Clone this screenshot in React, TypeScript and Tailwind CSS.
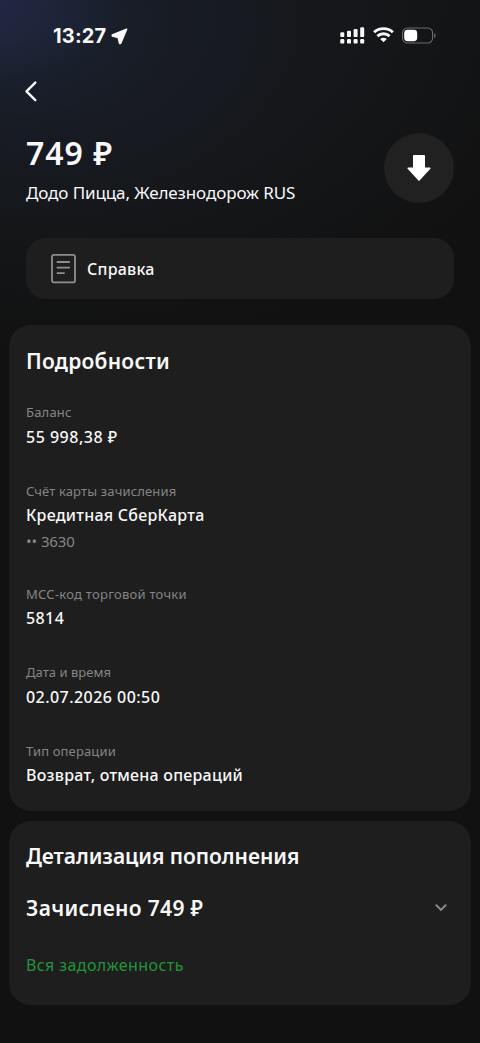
type Field = {
  label: string;
  value: string;
  note?: string;
  labelClass: string;
  valueClass: string;
};

const fields: Field[] = [
  { label: "Баланс", value: "55 998,38 ₽", labelClass: "tracking-[0.2px]", valueClass: "tracking-[0.5px]" },
  {
    label: "Счёт карты зачисления",
    value: "Кредитная СберКарта",
    note: "•• 3630",
    labelClass: "tracking-[0.15px]",
    valueClass: "tracking-[0.25px]",
  },
  { label: "МСС-код торговой точки", value: "5814", labelClass: "tracking-[0.25px]", valueClass: "tracking-[0.4px]" },
  { label: "Дата и время", value: "02.07.2026 00:50", labelClass: "tracking-[0.03px]", valueClass: "tracking-[0.45px]" },
  {
    label: "Тип операции",
    value: "Возврат, отмена операций",
    labelClass: "tracking-[0.14px]",
    valueClass: "tracking-[0.24px]",
  },
];

function StatusBar() {
  return (
    <div className="flex h-[70px] items-center justify-between pr-[44px] pl-[53px]">
      <div className="flex items-center gap-[5px] pt-[2px]">
        <span className="font-['Inter',sans-serif] text-[20px] leading-6 font-bold tracking-[0.2px]">13:27</span>
        <svg width="17" height="17" viewBox="0 0 17 17" fill="currentColor" stroke="currentColor" strokeWidth="1.6" strokeLinejoin="round">
          <path d="M15.6 1.2 1.3 6.9 1.4 8 7.2 9.4 8.6 15.4 9.6 15.5Z" />
        </svg>
      </div>
      <div className="flex items-center">
        <svg width="25" height="17" viewBox="0 0 25 17" fill="currentColor">
          <rect x="0.3" y="5.2" width="4" height="4.9" rx="1.2" />
          <rect x="7" y="3.8" width="4" height="6.3" rx="1.2" />
          <rect x="13.6" y="2" width="4" height="8.1" rx="1.2" />
          <rect x="20.2" y="0.2" width="4" height="9.9" rx="1.2" />
          <rect x="0.3" y="12" width="4" height="4.6" rx="1.2" />
          <rect x="7" y="12" width="4" height="4.6" rx="1.2" />
          <rect x="13.6" y="12" width="4" height="4.6" rx="1.2" />
          <rect x="20.2" y="12" width="4" height="4.6" rx="1.2" />
        </svg>
        <svg className="ml-[8px]" width="21" height="16" viewBox="0 0 21 16" fill="none" stroke="currentColor" strokeWidth="2.9">
          <path d="M1.1 5.3C6.3.4 14.7.4 19.9 5.3" />
          <path d="M4.4 9.1C7.9 5.9 13.1 5.9 16.6 9.1" />
          <path d="M7.2 11.9C9 10.2 12 10.2 13.8 11.9L10.5 15.2Z" fill="currentColor" stroke="none" />
        </svg>
        <svg className="ml-[8px]" width="34" height="17" viewBox="0 0 34 17">
          <rect x="0.6" y="1" width="30" height="15" rx="4.8" fill="none" stroke="#6c6d6f" strokeWidth="1.1" />
          <rect x="2.2" y="2.8" width="13" height="11.4" rx="3.4" fill="#fff" />
          <path d="M32.2 6v5c1.8-.8 1.8-4.2 0-5Z" fill="#6c6d6f" />
        </svg>
      </div>
    </div>
  );
}

function FieldRow({ label, value, note, labelClass, valueClass }: Field) {
  return (
    <div className="mb-[34px]">
      <dt className={`text-[13px] leading-[18px] text-[#858585] ${labelClass}`}>{label}</dt>
      <dd className={`mt-[4.5px] text-[16px] leading-[22px] font-[460] ${valueClass}`}>{value}</dd>
      {note && <dd className="mt-[4.5px] text-[15px] leading-[20px] tracking-[-0.1px] text-[#858585]">{note}</dd>}
    </div>
  );
}

export default function App() {
  return (
    <main className="h-[1043px] w-[480px] overflow-hidden bg-[#111111] bg-[radial-gradient(ellipse_120px_80px_at_0_0,#29285080,#29285000),radial-gradient(ellipse_330px_210px_at_0_20px,#1d293dcc,#1a213066_50%,#171a2000),radial-gradient(ellipse_520px_350px_at_10%_0,#16181d,#15171a_60%,#111111)] font-['Noto_Sans',sans-serif] text-[#f8f8f8]">
      <StatusBar />
      <div className="flex h-[42px] items-center pl-[24px]">
        <button aria-label="Назад">
          <svg width="14" height="22" viewBox="0 0 14 22" fill="none" stroke="currentColor" strokeWidth="2.4" strokeLinecap="round" strokeLinejoin="round">
            <path d="M11.3 2.6 2.5 11.4 11.3 20.2" />
          </svg>
        </button>
      </div>

      <header className="mt-[21px] flex h-[70px] items-start justify-between pr-[26px] pl-[26px]">
        <div>
          <h1 className="text-[32px] leading-10 font-[570] tracking-[1px]">749 ₽</h1>
          <p className="mt-[8px] text-[17px] leading-6 tracking-[-0.1px]">Додо Пицца, Железнодорож RUS</p>
        </div>
        <div className="flex size-[70px] items-center justify-center rounded-full bg-[#212122]">
          <svg width="24" height="28" viewBox="0 0 24 28" fill="#fff" stroke="#fff" strokeWidth="1.6" strokeLinejoin="round">
            <path d="M6.8 1.8H17.2V14.3H22.8L12 26 1.2 14.3H6.8Z" />
          </svg>
        </div>
      </header>

      <button className="mx-[26px] mt-[35px] flex h-[61px] w-[428px] items-center rounded-[20px] bg-[#1e1e1e] pl-[25px]">
        <svg width="25" height="30" viewBox="0 0 25 30" fill="none" stroke="#8e8e8e" strokeWidth="1.8" strokeLinecap="round">
          <rect x="1" y="0.9" width="23" height="27.5" rx="2" />
          <path d="M6.4 8H18.2M6.4 13.6H18.2M6.4 19.1H13" />
        </svg>
        <span className="ml-[11px] text-[16px] leading-6 font-[460] tracking-[0.25px]">Справка</span>
      </button>

      <section className="mx-[9px] mt-[26px] h-[486px] rounded-[22px] bg-[#1e1e1e] px-[17px] pt-[21px]">
        <h2 className="text-[21px] leading-[30px] font-[570] tracking-[0.22px]">Подробности</h2>
        <dl className="mt-[27.4px]">
          {fields.map((field) => (
            <FieldRow key={field.label} {...field} />
          ))}
        </dl>
      </section>

      <section className="mx-[9px] mt-[10px] h-[184px] rounded-[22px] bg-[#1e1e1e] px-[17px] pt-[20px]">
        <h2 className="text-[21px] leading-[30px] font-[570] tracking-[-0.06px]">Детализация пополнения</h2>
        <div className="mt-[22px] flex items-center justify-between pr-[7px]">
          <h3 className="text-[21px] leading-[30px] font-[570] tracking-[0.32px]">Зачислено 749 ₽</h3>
          <svg width="12" height="8" viewBox="0 0 12 8" fill="none" stroke="#8a8a8a" strokeWidth="2" strokeLinecap="round">
            <path d="M1.4 1.3 6 5.9 10.6 1.3" />
          </svg>
        </div>
        <p className="mt-[30px] text-[16px] leading-6 tracking-[0.42px] text-[#23933b]">Вся задолженность</p>
      </section>
    </main>
  );
}
